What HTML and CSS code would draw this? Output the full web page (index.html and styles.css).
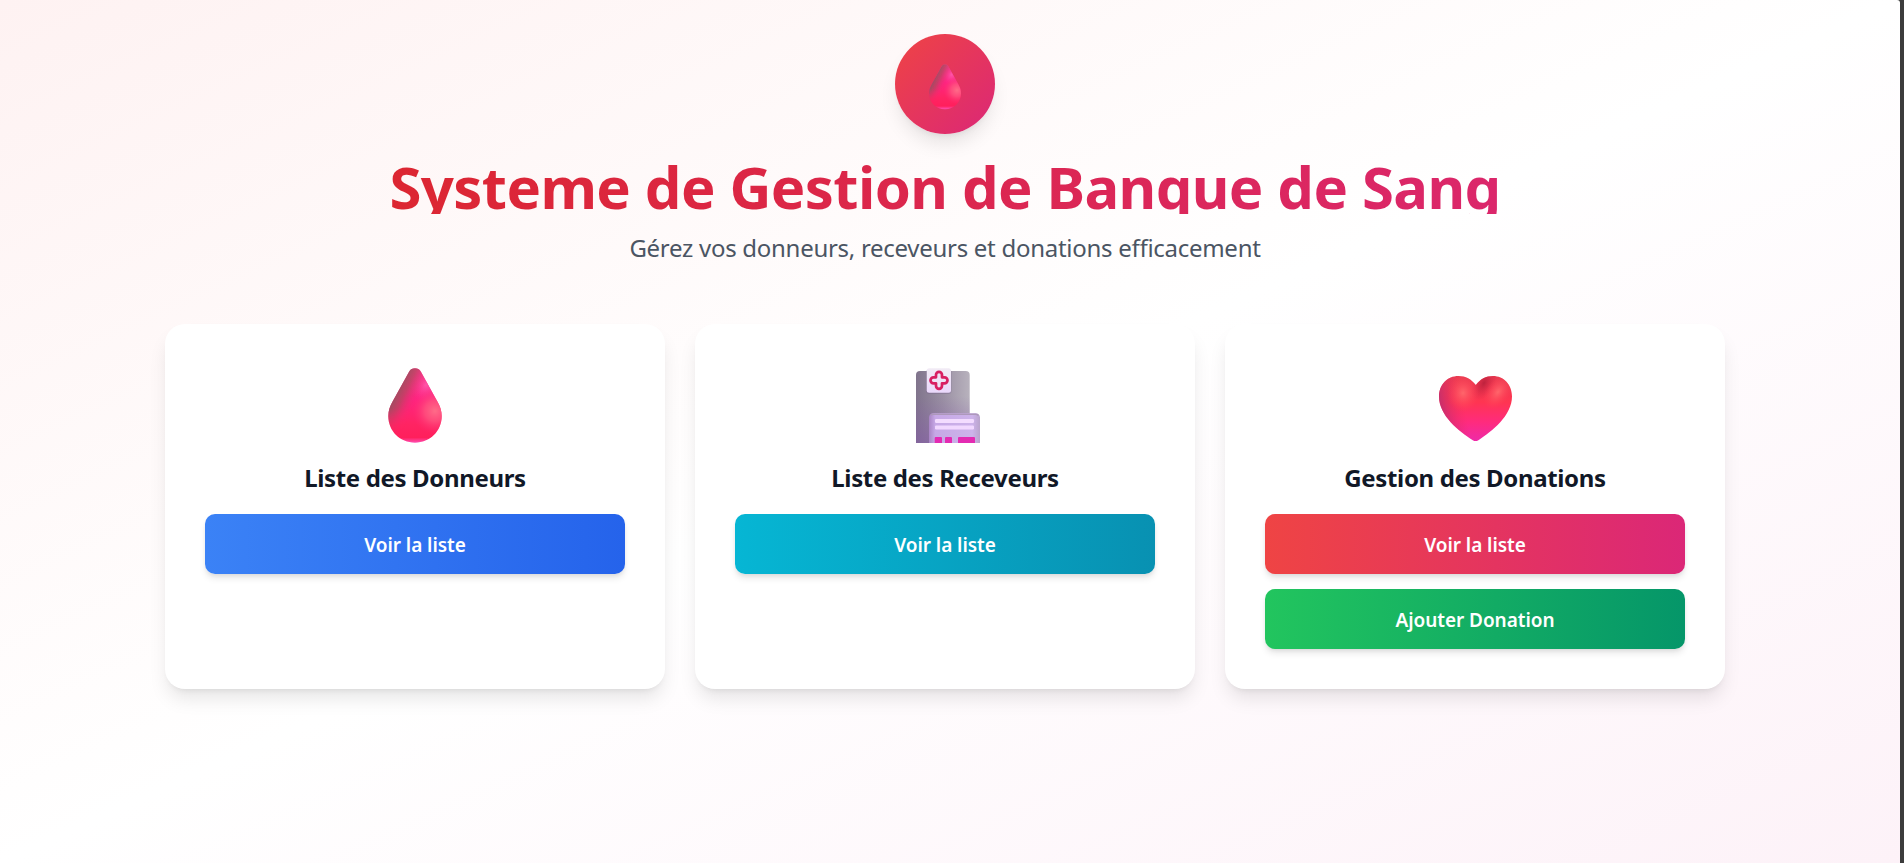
FILE: index.html
```html
<!DOCTYPE html>
<html lang="fr">
<head>
<meta charset="utf-8">
<title>Systeme de Gestion de Banque de Sang</title>
<link rel="stylesheet" href="styles.css">
</head>
<body>
<svg class="defs" width="0" height="0" aria-hidden="true">
  <defs>
    <linearGradient id="dropBase" x1="0" y1="0" x2="0" y2="1">
      <stop offset="0" stop-color="#f2458f"/><stop offset=".4" stop-color="#ff2482"/><stop offset=".75" stop-color="#ff2463"/><stop offset=".93" stop-color="#ff1f5c"/><stop offset="1" stop-color="#ff4fb4"/>
    </linearGradient>
    <linearGradient id="dropShade" gradientUnits="userSpaceOnUse" x1="19" y1="31" x2="40" y2="41">
      <stop offset="0" stop-color="#99505f"/><stop offset=".4" stop-color="#b8445f" stop-opacity=".75"/><stop offset="1" stop-color="#ff2478" stop-opacity="0"/>
    </linearGradient>
    <linearGradient id="dropFade" x1="0" y1="0" x2="0" y2="1">
      <stop offset=".55" stop-color="#fff"/><stop offset=".85" stop-color="#000"/>
    </linearGradient>
    <mask id="dropMask"><rect width="80" height="80" fill="url(#dropFade)"/></mask>
    <radialGradient id="dropGlow" gradientUnits="userSpaceOnUse" cx="60" cy="47" r="23">
      <stop offset="0" stop-color="#ff6c88"/><stop offset=".45" stop-color="#ff5580" stop-opacity=".75"/><stop offset="1" stop-color="#ff2b75" stop-opacity="0"/>
    </radialGradient>
    <radialGradient id="dropTop" gradientUnits="userSpaceOnUse" cx="51" cy="21" r="17">
      <stop offset="0" stop-color="#ff55a8"/><stop offset="1" stop-color="#ff2f8c" stop-opacity="0"/>
    </radialGradient>
    <path id="dropShape" d="M40 4.300c2.700 0 4.500.9 5.800 3.200l16.600 30c2.700 4.800 4.300 9.200 4.300 14.600 0 15.200-11.800 26.600-26.700 26.600S13.300 67.300 13.300 52.100c0-5.400 1.600-9.800 4.300-14.600l16.600-30C35.500 5.200 37.300 4.300 40 4.300z"/>
    <symbol id="drop" viewBox="0 0 80 80">
      <use href="#dropShape" fill="url(#dropBase)"/>
      <use href="#dropShape" fill="url(#dropTop)"/>
      <g mask="url(#dropMask)"><use href="#dropShape" fill="url(#dropShade)"/></g>
      <use href="#dropShape" fill="url(#dropGlow)"/>
    </symbol>
    <linearGradient id="tower" x1="0" y1="0" x2="1" y2="0">
      <stop offset="0" stop-color="#80748c"/><stop offset=".5" stop-color="#9a90a3"/><stop offset="1" stop-color="#b8b2bd"/>
    </linearGradient>
    <linearGradient id="towerLow" x1="0" y1="0" x2="0" y2="1">
      <stop offset=".35" stop-color="#8458a8" stop-opacity="0"/><stop offset="1" stop-color="#8458a8" stop-opacity=".55"/>
    </linearGradient>
    <linearGradient id="front" x1="0" y1="0" x2="1" y2="0">
      <stop offset="0" stop-color="#a884c4"/><stop offset=".12" stop-color="#c6a8e6"/><stop offset=".85" stop-color="#cdb3ea"/><stop offset="1" stop-color="#b9a4cc"/>
    </linearGradient>
    <linearGradient id="badge" x1="0" y1="0" x2="0" y2="1">
      <stop offset="0" stop-color="#f1ebf5"/><stop offset="1" stop-color="#ead8fb"/>
    </linearGradient>
    <linearGradient id="heartBase" x1="0" y1="0" x2="0" y2="1">
      <stop offset="0" stop-color="#e83c50"/><stop offset=".4" stop-color="#ff3551"/><stop offset=".7" stop-color="#ff2b7c"/><stop offset="1" stop-color="#ee2aa8"/>
    </linearGradient>
    <linearGradient id="heartLeft" gradientUnits="userSpaceOnUse" x1="5" y1="45" x2="29" y2="40">
      <stop offset="0" stop-color="#b52c74" stop-opacity=".8"/><stop offset="1" stop-color="#ee2c60" stop-opacity="0"/>
    </linearGradient>
    <radialGradient id="heartGlow">
      <stop offset="0" stop-color="#ff666b"/><stop offset="1" stop-color="#ff4058" stop-opacity="0"/>
    </radialGradient>
    <radialGradient id="heartDark">
      <stop offset="0" stop-color="#b91f3b" stop-opacity=".9"/><stop offset="1" stop-color="#d92649" stop-opacity="0"/>
    </radialGradient>
    <path id="heartShape" d="M40.800 21C36.500 15.200 30.500 12 23.500 12 12.400 12 4 20.600 4 32.500 4 51.500 24 67.500 37.800 76.200c2 1.200 3.600 1.200 5.600 0C57 67.500 77 51.500 77 32.500 77 20.600 68.600 12 58 12 51 12 45 15.200 40.800 21z"/>
    <clipPath id="heartClip"><use href="#heartShape"/></clipPath>
  </defs>
</svg>

<main class="page">
  <div class="container">
    <header class="hero">
      <div class="logo"><svg class="logo-icon"><use href="#drop"/></svg></div>
      <h1 class="title">Systeme de Gestion de Banque de Sang</h1>
      <p class="subtitle">Gérez vos donneurs, receveurs et donations efficacement</p>
    </header>

    <section class="cards">
      <article class="card">
        <svg class="card-icon"><use href="#drop"/></svg>
        <h2 class="card-title">Liste des Donneurs</h2>
        <div class="actions"><a class="btn btn-blue">Voir la liste</a></div>
      </article>

      <article class="card">
        <svg class="card-icon" viewBox="0 0 80 80">
          <path d="M11 79V11a4 4 0 0 1 4-4h45.700a4 4 0 0 1 4 4v68z" fill="url(#tower)"/>
          <path d="M11 79V11a4 4 0 0 1 4-4h45.700a4 4 0 0 1 4 4v68z" fill="url(#towerLow)"/>
          <rect x="21" y="5.500" width="25.500" height="24.500" rx="3" fill="#75628a" opacity=".35"/>
          <rect x="21.700" y="4.300" width="24.300" height="24.400" rx="2.500" fill="url(#badge)"/>
          <path d="M31 10.800a3 3 0 0 1 6 0v2.500h2.500a3 3 0 0 1 0 6H37v2.500a3 3 0 0 1-6 0v-2.500h-2.500a3 3 0 0 1 0-6H31z" fill="#eee2f6" stroke="#d81f62" stroke-width="2.700" stroke-linejoin="round"/>
          <path d="M24 79V53.500a4.200 4.200 0 0 1 4.200-4.200h42.600a4.200 4.200 0 0 1 4.200 4.200V79z" fill="url(#front)"/>
          <path d="M26 51.200q1-1 2.500-1h42q2 0 3 1.300" fill="none" stroke="#ad98bb" stroke-width="1.600"/>
          <rect x="30" y="55" width="39" height="4" rx="1.200" fill="#f3dcff"/>
          <rect x="30" y="61.400" width="39" height="4" rx="1.200" fill="#f1d8ff"/>
          <path d="M29.700 79v-5a1 1 0 0 1 1-1H36a1 1 0 0 1 1 1v5zM40 79v-5a1 1 0 0 1 1-1h5a1 1 0 0 1 1 1v5zM53 79v-5a1 1 0 0 1 1-1h15a1 1 0 0 1 1 1v5z" fill="#e32bb2"/>
        </svg>
        <h2 class="card-title">Liste des Receveurs</h2>
        <div class="actions"><a class="btn btn-cyan">Voir la liste</a></div>
      </article>

      <article class="card">
        <svg class="card-icon" viewBox="0 0 80 80">
          <use href="#heartShape" fill="url(#heartBase)"/>
          <g clip-path="url(#heartClip)">
            <rect width="80" height="80" fill="url(#heartLeft)"/>
            <ellipse cx="49" cy="19" rx="11" ry="19" transform="rotate(28 49 19)" fill="url(#heartDark)"/>
            <ellipse cx="28" cy="29" rx="16" ry="19" fill="url(#heartGlow)"/>
            <ellipse cx="63" cy="28" rx="12" ry="19" transform="rotate(35 63 28)" fill="url(#heartGlow)"/>
          </g>
        </svg>
        <h2 class="card-title">Gestion des Donations</h2>
        <div class="actions">
          <a class="btn btn-red">Voir la liste</a>
          <a class="btn btn-green">Ajouter Donation</a>
        </div>
      </article>
    </section>
  </div>
</main>
</body>
</html>
```
FILE: styles.css
```css
* { box-sizing: border-box; margin: 0; padding: 0; }

body {
  height: 863px;
  overflow: hidden;
  background: #3c3c3c;
  font-family: "Noto Sans", "Open Sans", sans-serif;
}

.defs { position: absolute; }

.page {
  width: 1900px;
  height: 863px;
  padding: 34px 10px 0 0;
  border-top-right-radius: 3px;
  background: linear-gradient(to bottom right, #fef2f2, #ffffff 50%, #fdf2f8);
}

.container { width: 1560px; margin: 0 auto; }

.hero { display: flex; flex-direction: column; align-items: center; margin-bottom: 60px; }

.logo {
  display: flex;
  align-items: center;
  justify-content: center;
  width: 100px;
  height: 100px;
  padding-top: 4px;
  margin-bottom: 20px;
  border-radius: 50%;
  background: linear-gradient(to bottom right, #ef4444, #db2777);
  box-shadow: 0 12.500px 18.750px -3.750px rgba(0, 0, 0, .1), 0 5px 7.500px -5px rgba(0, 0, 0, .1);
}

.logo-icon { width: 48px; height: 48px; }

.title {
  width: 100%;
  height: 60px;
  padding-top: 3px;
  margin-bottom: 15px;
  font-size: 58px;
  font-weight: 700;
  line-height: 60px;
  letter-spacing: -.6px;
  text-align: center;
  white-space: nowrap;
  color: transparent;
  background: linear-gradient(to right, #dc2626, #db2777);
  background-clip: text;
  -webkit-background-clip: text;
}

.subtitle {
  height: 35px;
  padding-top: 1px;
  font-size: 24px;
  line-height: 35px;
  letter-spacing: -.28px;
  color: #4b5563;
  white-space: nowrap;
}

.cards { display: grid; grid-template-columns: repeat(3, 1fr); gap: 30px; }

.card {
  display: flex;
  flex-direction: column;
  align-items: center;
  height: 365px;
  padding: 40px;
  border-radius: 20px;
  background: #fff;
  box-shadow: 0 12.500px 18.750px -3.750px rgba(0, 0, 0, .1), 0 5px 7.500px -5px rgba(0, 0, 0, .1);
}

.card-icon { width: 80px; height: 80px; margin-bottom: 15px; flex: none; }

.card-title {
  height: 35px;
  padding-top: 1px;
  margin-bottom: 20px;
  font-size: 24px;
  font-weight: 700;
  line-height: 35px;
  letter-spacing: -.35px;
  color: #111827;
  white-space: nowrap;
}

.actions { display: flex; flex-direction: column; gap: 15px; width: 100%; }

.btn {
  padding: 16px 15px 14px;
  border-radius: 10px;
  font-size: 19px;
  font-weight: 600;
  line-height: 30px;
  letter-spacing: -.05px;
  text-align: center;
  color: #fff;
  box-shadow: 0 5px 7.500px -1.250px rgba(0, 0, 0, .1), 0 2.500px 5px -2.500px rgba(0, 0, 0, .1);
}

.btn-blue { background: linear-gradient(to right, #3b82f6, #2563eb); }
.btn-cyan { background: linear-gradient(to right, #06b6d4, #0891b2); }
.btn-red { background: linear-gradient(to right, #ef4444, #db2777); }
.btn-green { background: linear-gradient(to right, #22c55e, #059669); }
```
